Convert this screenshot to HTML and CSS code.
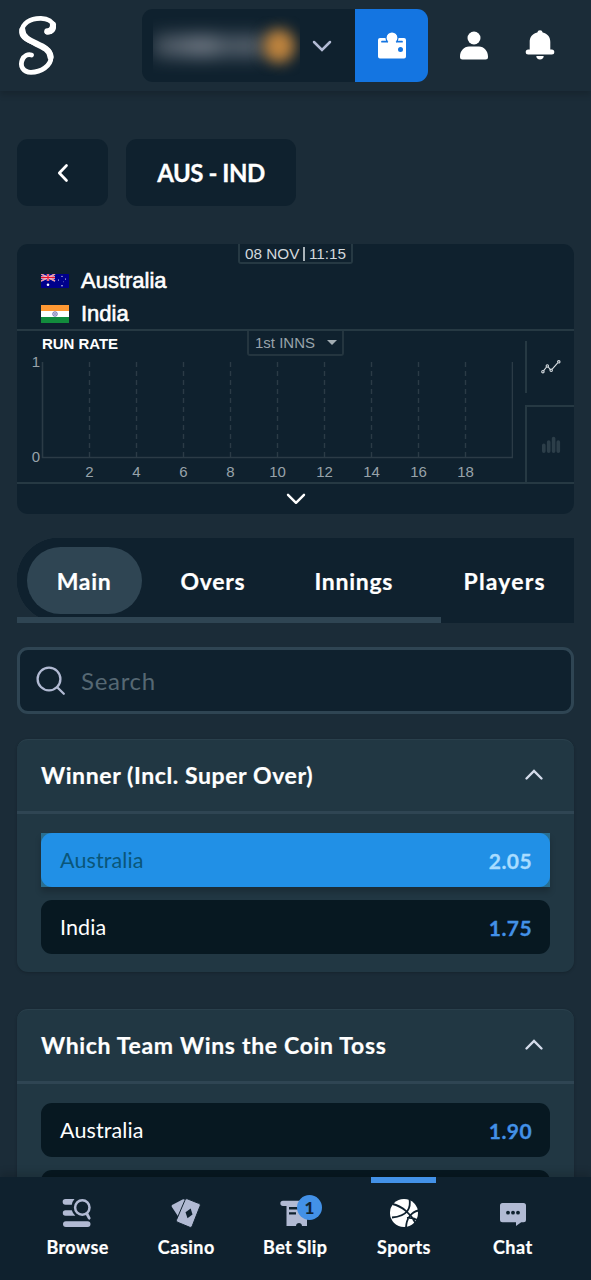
FILE: index.html
```html
<!DOCTYPE html>
<html lang="en">
<head>
<meta charset="utf-8">
<meta name="viewport" content="width=device-width, initial-scale=1">
<title>AUS - IND</title>
<link rel="stylesheet" href="styles.css">
</head>
<body>
<header class="topbar">
  <svg class="logo" width="40" height="62" viewBox="0 0 40 62" fill="none" stroke="#fff" stroke-linecap="round" stroke-linejoin="round"><path stroke-width="4.800" d="M29 17C39 18 38 3.500 23 3.300C12 3.100 4 8.500 3.700 17C3.300 29 33 28 33 42C33 51 23 57.300 13 57.300C5 57.300 1.800 51 4.200 45C6 40.500 10 39 13.500 40"/><path stroke-width="6.200" d="M4.300 15C4 29 32 28 32.500 42M29.300 16.300C33 16.500 35.500 13 35 9.500"/></svg>
  <div class="wallet">
    <div class="balance">
      <div class="balance-blur"><i class="smudge"></i><i class="coin"></i></div>
      <svg width="20" height="12" viewBox="0 0 20 12" fill="none" stroke="#b1bad3" stroke-width="2.500" stroke-linecap="round"><path d="M2 2l8 8 8-8"/></svg>
    </div>
    <div class="wallet-btn">
      <svg width="30" height="28" viewBox="0 0 30 28"><path fill="#fff" fill-rule="evenodd" d="M3 6h24a2 2 0 0 1 2 2v16.500a2 2 0 0 1-2 2H3a2 2 0 0 1-2-2V8a2 2 0 0 1 2-2zM23.500 15a2.500 2.500 0 1 0 0 5 2.500 2.500 0 0 0 0-5z"/><path stroke="#1475e1" stroke-width="1.800" stroke-linecap="round" d="M5 9.700h20"/><path stroke="#1475e1" stroke-width="1.200" fill="#fff" d="M11 10.300a6 6 0 1 1 8 0"/><path fill="#fff" d="M10.800 9.600h8.400v3h-8.400z"/></svg>
    </div>
  </div>
  <svg class="user" width="30" height="30" viewBox="0 0 30 30" fill="#fff"><circle cx="15" cy="7" r="6.500"/><path d="M1 26v-.5C1 20 5 15.500 10 15.500h10c5 0 9 4.500 9 10v.5a2.500 2.500 0 0 1-2.500 2.500h-23A2.500 2.500 0 0 1 1 26z"/></svg>
  <svg class="bell" width="30" height="32" viewBox="0 0 30 32" fill="#fff"><path d="M15 1.200a2.800 2.800 0 0 1 2.700 2.300C22.500 4.600 25.300 8 25.300 13v7.500h1.500a2.300 2.300 0 0 1 0 5H3.200a2.300 2.300 0 0 1 0-5h1.500V13c0-5 2.800-8.400 7.600-9.500A2.800 2.800 0 0 1 15 1.200zM11.300 27h7.400c0 2-1.500 3.600-3.700 3.600S11.300 29 11.300 27z"/></svg>
</header>

<main class="page">
  <div class="crumbs">
    <div class="back"><svg width="12" height="20" viewBox="0 0 12 20" fill="none" stroke="#fff" stroke-width="2.700" stroke-linecap="round" stroke-linejoin="round"><path d="M9.500 2.500L2.300 10l7.200 7.500"/></svg></div>
    <div class="match">AUS - IND</div>
  </div>

  <section class="board">
    <div class="board-head">
      <div class="date"><span>08 NOV</span><i></i><span>11:15</span></div>
      <div class="team">
        <svg width="28" height="14" viewBox="0 0 28 14"><path fill="#00008b" d="M0 0h28v14H0z"/><path stroke="#fff" stroke-width="1.500" d="M0 0l14 7M14 0L0 7"/><path stroke="#e8112d" stroke-width=".6" d="M0 0l14 7M14 0L0 7"/><path stroke="#fff" stroke-width="2.400" d="M7 0v7M0 3.500h14"/><path stroke="#e8112d" stroke-width="1.300" d="M7 0v7M0 3.500h14"/><g fill="#fff"><circle cx="7" cy="10.700" r="1.300"/><circle cx="21" cy="2.300" r=".6"/><circle cx="17.500" cy="6" r=".6"/><circle cx="24.500" cy="5" r=".6"/><circle cx="22.500" cy="7.800" r=".4"/><circle cx="21" cy="11.700" r=".7"/></g></svg>
        <span>Australia</span>
      </div>
      <div class="team">
        <svg width="28" height="18" viewBox="0 0 28 18"><path fill="#fff" d="M0 0h28v18H0z"/><path fill="#f93" d="M0 0h28v6H0z"/><path fill="#128c3c" d="M0 12h28v6H0z"/><circle cx="14" cy="9" r="2.300" fill="#d5d5ea" stroke="#4b4b95" stroke-width=".7"/><circle cx="14" cy="9" r=".7" fill="#4b4b95"/></svg>
        <span>India</span>
      </div>
    </div>
    <div class="board-body">
      <div class="chart">
        <div class="chart-head"><b>RUN RATE</b><div class="innings">1st INNS<i></i></div></div>
        <div class="plot-row">
          <div class="ylabels"><span>1</span><span>0</span></div>
          <svg class="plot" width="472" height="98" viewBox="0 0 472 98" fill="none" stroke="#2b3b46"><path stroke-width="1.600" d="M1.500 1v95.500h470V1"/><path stroke-width="1.400" stroke-dasharray="5 4" d="M48.500 1v95M95.500 1v95M142.500 1v95M189.500 1v95M236.500 1v95M283.500 1v95M330.500 1v95M377.500 1v95M424.500 1v95"/></svg>
        </div>
        <div class="xlabels"><span>2</span><span>4</span><span>6</span><span>8</span><span>10</span><span>12</span><span>14</span><span>16</span><span>18</span></div>
      </div>
      <div class="views">
        <div class="view-on"><svg width="20" height="14" viewBox="0 0 20 14" fill="none" stroke="#d9dfe3" stroke-width="1.100"><path d="M2.500 10.800l3-3.800M7.300 7l2.200 2.800M11.200 9.200l5.500-6.400"/><circle cx="1.900" cy="11.700" r="1.200"/><circle cx="6.300" cy="5.900" r="1.200"/><circle cx="10.200" cy="10.300" r="1.200"/><circle cx="17.800" cy="1.800" r="1.200"/></svg></div>
        <div class="view-off"><svg width="20" height="18" viewBox="0 0 20 18" stroke="#2c3e49" stroke-width="3.600" stroke-linecap="round"><path d="M2.800 9.300v6M7.700 6v9.300M12.600 2.500v12.800M17.300 6v9.300"/></svg></div>
      </div>
    </div>
    <div class="board-more"><svg width="20" height="12" viewBox="0 0 20 12" fill="none" stroke="#fff" stroke-width="2.400" stroke-linecap="round" stroke-linejoin="round"><path d="M2 1.800l8 8 8-8"/></svg></div>
  </section>

  <nav class="tabs">
    <div class="tab-list"><span class="tab tab-on">Main</span><span class="tab overs">Overs</span><span class="tab inns">Innings</span><span class="tab players">Players</span></div>
    <div class="scroll-thumb"></div>
  </nav>

  <div class="search">
    <svg width="30" height="30" viewBox="0 0 30 30" fill="none" stroke="#b1bad3" stroke-width="2.300" stroke-linecap="round"><circle cx="13" cy="13" r="11.400"/><path d="M21.200 21.200l6.600 6.600"/></svg>
    <span>Search</span>
  </div>

  <section class="market">
    <div class="market-head"><h2 class="title-winner">Winner (Incl. Super Over)</h2><svg width="20" height="12" viewBox="0 0 20 12" fill="none" stroke="#d5dceb" stroke-width="2.400" stroke-linecap="round"><path d="M2.500 9.500L10 2l7.500 7.500"/></svg></div>
    <div class="market-body">
      <div class="pick-wrap"><div class="outcome picked"><span>Australia</span><b>2.05</b></div></div>
      <div class="outcome"><span>India</span><b>1.75</b></div>
    </div>
  </section>
  <section class="market">
    <div class="market-head"><h2 class="title-toss">Which Team Wins the Coin Toss</h2><svg width="20" height="12" viewBox="0 0 20 12" fill="none" stroke="#d5dceb" stroke-width="2.400" stroke-linecap="round"><path d="M2.500 9.500L10 2l7.500 7.500"/></svg></div>
    <div class="market-body">
      <div class="outcome"><span>Australia</span><b>1.90</b></div>
      <div class="outcome"></div>
    </div>
  </section>
</main>

<nav class="bottom">
  <div class="item"><svg width="30" height="30" viewBox="0 0 30 30" fill="#b1bad3"><path d="M3.500 1H12.500a11 11 0 0 0-2.700 5.700H3.500a2.800 2.800 0 0 1 0-5.700zM3.500 12.300h6.300a11 11 0 0 0 3.500 5.400H3.500a2.700 2.700 0 0 1 0-5.400z"/><rect x="1" y="23.200" width="27.500" height="5.800" rx="2.900"/><g fill="none" stroke="#b1bad3" stroke-width="2.500"><circle cx="20.300" cy="9.500" r="7.200"/><path stroke-width="2.800" stroke-linecap="round" d="M25 16l2.200 4.200"/></g></svg><span class="n-browse">Browse</span></div>
  <div class="item"><svg width="30" height="30" viewBox="0 0 30 30" fill="#b1bad3"><path d="M2 6.500L11.500 1.600a2 2 0 0 1 2.700.8L7.500 19 .9 9a1.800 1.800 0 0 1 1.100-2.500z"/><path fill-rule="evenodd" stroke="#0f212e" stroke-width="1" d="M17 1.100l10.500 4.200a2 2 0 0 1 1.400 3.100L21.300 27.800a2 2 0 0 1-3 1.300L7 24.400a2 2 0 0 1-1.300-3L13.800 2.500A2 2 0 0 1 17 1.100z"/><path fill="#0f212e" d="M19.700 10.500l-5.200 3.700 2 6 5-3.800z"/></svg><span class="n-casino">Casino</span></div>
  <div class="item"><div class="slip"><svg width="30" height="30" viewBox="0 0 30 30" fill="#b1bad3"><path fill-rule="evenodd" d="M3 2.700h24a2.400 2.400 0 0 1 0 5V28h-5c0-4-6-4-6 0H6.500V8H3a2.500 2.500 0 0 1 0-5.300zM9 9v2.500h14V9zM9 14.300v2.200h7v-2.200z"/></svg><em>1</em></div><span class="n-slip">Bet Slip</span></div>
  <div class="item active"><svg width="30" height="30" viewBox="0 0 30 30"><circle cx="15" cy="15" r="14" fill="#fff"/><g fill="none" stroke="#0f212e" stroke-width="1.800"><path d="M3.500 6C13 8 22 16 26.500 25M20.500 1c1.500 8-1 17-17.500 18.500M29.500 12.500C23 14 17.500 19.500 17 29.500M18 20c4-.3 8 .5 10 2"/></g></svg><span class="n-sports">Sports</span></div>
  <div class="item"><svg width="30" height="30" viewBox="0 0 30 30"><path fill="#b1bad3" d="M4.500 5h21a2.500 2.500 0 0 1 2.500 2.500v14.300a2.500 2.500 0 0 1-2.500 2.500h-2.300L18 28v-3.700H4.500A2.500 2.500 0 0 1 2 21.800V7.500A2.500 2.500 0 0 1 4.500 5z"/><g fill="#0f212e"><circle cx="10" cy="14.700" r="1.900"/><circle cx="15" cy="14.700" r="1.900"/><circle cx="20" cy="14.700" r="1.900"/></g></svg><span class="n-chat">Chat</span></div>
</nav>
</body>
</html>
```

FILE: styles.css
```css
* { box-sizing: border-box; }
body {
  margin: 0;
  height: 1280px;
  overflow: hidden;
  display: flex;
  flex-direction: column;
  background: #1b2c38;
  color: #fff;
  font-family: Lato, "Open Sans", sans-serif;
}
svg { display: block; flex: none; }

/* Header */
.topbar {
  flex: none;
  height: 91px;
  display: flex;
  align-items: flex-start;
  background: #1b2c38;
  box-shadow: 0 4px 6px rgba(0, 0, 0, .16);
}
.logo { margin: 15px 0 0 18px; }
.wallet { display: flex; width: 286px; height: 73px; margin: 9px 0 0 84px; border-radius: 11px; overflow: hidden; }
.balance { width: 213px; display: flex; align-items: center; gap: 12px; padding-left: 11px; background: #0f212e; }
.balance-blur { width: 147px; height: 60px; display: flex; align-items: center; overflow: hidden; }
.smudge { width: 114px; height: 22px; margin-right: -4px; background: linear-gradient(90deg, #44505c 0, #737c87 45%, #4b5864 66%, #5a6570 84%, #44505c 100%); filter: blur(9px); }
.coin { width: 32px; height: 34px; border-radius: 50%; background: #bd833e; filter: blur(7px); }
.wallet-btn { flex: 1; display: grid; place-items: center; background: #1475e1; }
.user { margin: 31px 0 0 31px; }
.bell { margin: 29px 0 0 36px; }

/* Page */
.page { flex: 1; min-height: 0; overflow: hidden; padding: 48px 17px 0; display: flex; flex-direction: column; }
.page > * { flex: none; }
.crumbs { display: flex; gap: 18px; height: 67px; font-size: 24px; font-weight: 700; }
.back, .match { display: grid; place-items: center; background: #0f212e; border-radius: 11px; }
.back { width: 91px; }
.match { width: 170px; letter-spacing: -.45px; -webkit-text-stroke: .3px #fff; }

/* Scoreboard */
.board { height: 270px; margin-top: 38px; background: #0f212e; border-radius: 11px; overflow: hidden; font-family: "Liberation Sans", Arial, sans-serif; }
.board-head { height: 87px; border-bottom: 2px solid #263943; }
.date { width: 115px; height: 20px; margin: 0 auto; display: flex; align-items: center; justify-content: center; gap: 4px; border: 2px solid #263943; border-top: 0; border-radius: 0 0 3px 3px; font-size: 15.300px; line-height: 18px; padding-top: 1px; color: #d3d8dc; white-space: nowrap; }
.date i { width: 1.500px; height: 14px; background: #aab3b9; }
.team { height: 33px; display: flex; align-items: center; gap: 12px; padding-left: 24px; font-size: 22px; -webkit-text-stroke: .6px #fff; }
.board-body { height: 153px; display: flex; border-bottom: 2px solid #263943; }
.chart { width: 508px; color: #98a3aa; font-size: 15px; }
.chart-head { display: flex; height: 30px; padding-left: 25px; }
.chart-head b { width: 205px; padding-top: 4px; font-size: 15px; letter-spacing: -.05px; color: #fff; }
.innings { width: 97px; height: 25px; display: flex; align-items: center; gap: 12px; padding-left: 6px; border: 2px solid #24353f; border-top: 0; border-radius: 0 0 3px 3px; font-size: 15px; white-space: nowrap; }
.innings i { border: 5px solid transparent; border-top-color: #a3adb3; border-bottom: 0; }
.plot-row { display: flex; height: 98px; }
.ylabels { width: 24px; display: flex; flex-direction: column; justify-content: space-between; align-items: flex-end; padding-right: 1px; line-height: 16px; margin: -7px 0 -6px; }
.xlabels { width: 423px; margin: 4px 0 0 49px; display: grid; grid-template-columns: repeat(9, 1fr); text-align: center; line-height: 18px; }
.views { width: 49px; padding-top: 10px; }
.view-on { height: 52px; display: grid; place-items: center; border-left: 2px solid #263943; }
.view-off { height: 77px; margin-top: 12px; display: grid; place-items: center; border-left: 2px solid #263943; border-top: 2px solid #263943; }
.board-more { height: 30px; display: flex; justify-content: center; padding-top: 9px; }

/* Tabs */
.tabs { width: 557px; height: 85px; margin-top: 24px; display: flex; flex-direction: column; justify-content: space-between; background: linear-gradient(#0f212e, #0f212e) right / calc(100% - 42px) 100% no-repeat, radial-gradient(circle at 42px 42px, #0f212e 42px, transparent 42.500px) left / 42px 100% no-repeat; }
.tab-list { display: flex; align-items: center; height: 85px; margin-bottom: -6px; font-size: 23px; font-weight: 700; letter-spacing: .7px; -webkit-text-stroke: .2px #fff; }
.tab-on { width: 115px; height: 67px; margin-left: 9.500px; display: grid; place-items: center; border-radius: 34px; background: #2f4553; }
.overs { margin-left: 39px; width: 134px; }
.inns { width: 149px; }
.players { letter-spacing: 1.200px; }
.scroll-thumb { flex: none; width: 424px; height: 6px; background: #2f4553; }

/* Search */
.search { height: 67px; margin-top: 24px; display: flex; align-items: center; gap: 15px; padding-left: 16px; border: 3px solid #2f4553; border-radius: 11px; background: #0f212e; color: #566873; font-size: 24px; letter-spacing: .7px; }

/* Markets */
.market { margin: 25px 0 12px; background: #213743; border-radius: 11px; overflow: hidden; border-top: 1px solid #2a404c; box-shadow: 0 1px 3px rgba(0, 0, 0, .2); }
.market-head { height: 74px; display: flex; align-items: center; justify-content: space-between; padding: 0 30px 1px 24px; border-bottom: 3px solid #2f4553; }
.market-head h2 { margin: 0; font-size: 23px; font-weight: 700; white-space: nowrap; letter-spacing: .6px; -webkit-text-stroke: .2px #fff; }
.market-head .title-toss { letter-spacing: .680px; }
.market-body { display: flex; flex-direction: column; gap: 13px; padding: 19px 24px 18px; }
.outcome { height: 54px; display: flex; align-items: center; justify-content: space-between; padding: 0 18px 0 19px; border-radius: 11px; background: #071821; font-size: 21.500px; letter-spacing: .1px; }
.outcome b { color: #4391e7; font-weight: 700; font-size: 21px; letter-spacing: .4px; -webkit-text-stroke: .3px currentColor; }
.pick-wrap { background: #296f91; box-shadow: 0 5px 6px rgba(0, 0, 0, .2); }
.picked { background: #2190e6; color: #0a5679; }
.picked b { color: #a9dcff; }

/* Bottom navigation */
.bottom { position: relative; flex: none; height: 103px; display: grid; grid-template-columns: repeat(5, 1fr); padding: 0 24px 0 23px; background: #0f212e; box-shadow: 0 -5px 7px rgba(0, 0, 0, .14); }
.item { display: flex; flex-direction: column; align-items: center; gap: 8px; padding-top: 21px; font-size: 18px; font-weight: 700; line-height: 22px; white-space: nowrap; letter-spacing: .35px; -webkit-text-stroke: .2px #fff; }
.item > span { margin-right: -.35px; }
.n-casino, .n-chat { letter-spacing: .5px; }
.active { background: linear-gradient(#4391e7, #4391e7) center top / 65px 6px no-repeat; }
.slip { position: relative; }
.slip em { position: absolute; left: 17px; top: -3px; width: 25px; height: 25px; border-radius: 50%; background: #4391e7; color: #0f212e; font-style: normal; font-size: 17px; line-height: 25px; text-align: center; letter-spacing: 0; -webkit-text-stroke-color: #0f212e; }
```
